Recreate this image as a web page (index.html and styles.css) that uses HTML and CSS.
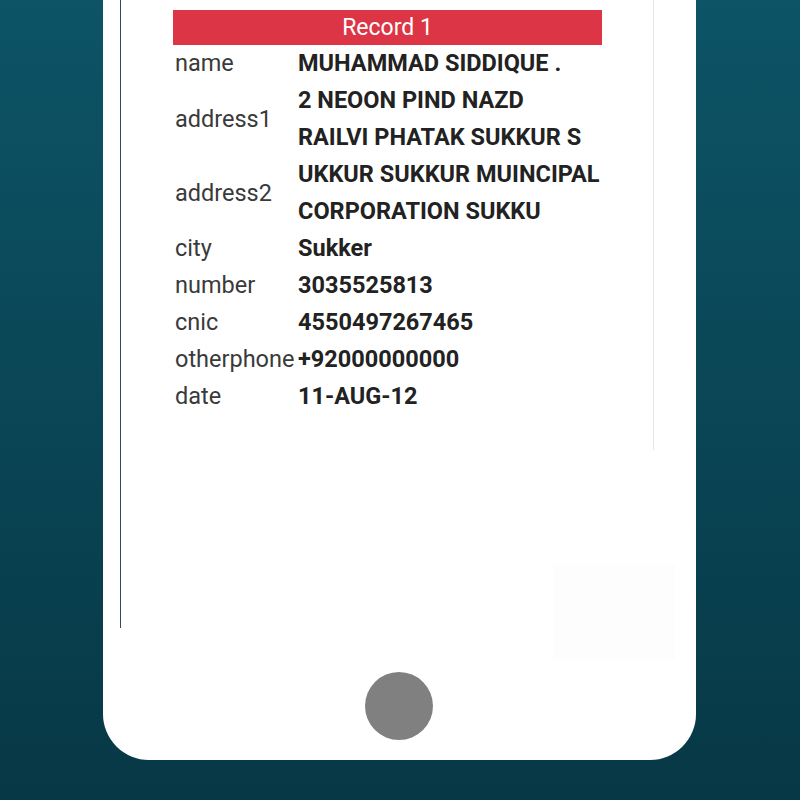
FILE: index.html
```html
<!DOCTYPE html>
<html>
<head>
<meta charset="utf-8">
<link rel="stylesheet" href="styles.css">
</head>
<body>
<div class="phone">
  <div class="screen">
    <div class="panel">
      <div class="record">
        <div class="record-title">Record 1</div>
        <div class="rows">
          <div class="label">name</div><div class="value">MUHAMMAD SIDDIQUE .</div>
          <div class="label">address1</div><div class="value">2 NEOON PIND NAZD<br>RAILVI PHATAK SUKKUR S</div>
          <div class="label">address2</div><div class="value">UKKUR SUKKUR MUINCIPAL<br>CORPORATION SUKKU</div>
          <div class="label">city</div><div class="value">Sukker</div>
          <div class="label">number</div><div class="value">3035525813</div>
          <div class="label">cnic</div><div class="value">4550497267465</div>
          <div class="label">otherphone</div><div class="value">+92000000000</div>
          <div class="label">date</div><div class="value">11-AUG-12</div>
        </div>
      </div>
    </div>
    <div class="ghost"></div>
  </div>
  <div class="home"></div>
</div>
</body>
</html>
```

FILE: styles.css
```css
html, body {
  margin: 0;
  padding: 0;
}
body {
  width: 800px;
  height: 800px;
  overflow: hidden;
  background: linear-gradient(180deg, #0c5466 0%, #0a4656 50%, #073845 100%);
  font-family: Roboto, "Noto Sans", sans-serif;
}
.phone {
  margin-left: 103px;
  width: 593px;
  height: 760px;
  background: #ffffff;
  border-radius: 0 0 46px 46px;
  display: flex;
  flex-direction: column;
  align-items: stretch;
}
.screen {
  margin-left: 17px;
  width: 580px;
  height: 628px;
  border-left: 1.5px solid #2e4d57;
  display: flex;
  flex-direction: column;
  position: relative;
}
.panel {
  width: 533px;
  height: 450px;
  border-right: 1.5px solid #e6e6e6;
  box-sizing: border-box;
  padding-top: 10px;
  padding-left: 52px;
}
.record {
  width: 429px;
}
.record-title {
  background: #dc3545;
  color: #ffffff;
  font-size: 23px;
  height: 35px;
  line-height: 35px;
  text-align: center;
}
.rows {
  display: grid;
  grid-template-columns: 125px 1fr;
  align-items: center;
  line-height: 37px;
  font-size: 23.5px;
}
.label {
  color: #3a3a3a;
  padding-left: 2px;
  white-space: nowrap;
}
.value {
  color: #222222;
  font-weight: bold;
  white-space: nowrap;
}
.ghost {
  position: absolute;
  left: 432px;
  top: 565px;
  width: 122px;
  height: 95px;
  background: #fdfdfd;
}
.home {
  align-self: center;
  margin-top: 44px;
  margin-left: -2px;
  width: 68px;
  height: 68px;
  border-radius: 50%;
  background: #808080;
}
```
